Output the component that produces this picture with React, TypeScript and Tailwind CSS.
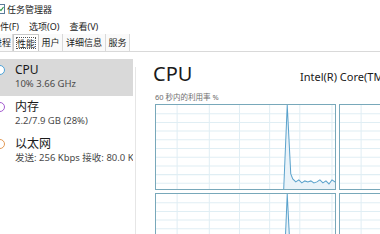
import React from 'react';

const VLINES = [21, 53, 83, 113, 143, 175];
const HLINES = [8.6, 17.2, 25.8, 34.4, 43, 51.6, 60.2, 68.8, 77.4];

const WIGGLE =
  'L134 68 L136 73 L139 76 L142 74 L145 77 L148 75 L151 76 L154 75 L157 77 L160 76 L163 74 L166 77 L169 75 L172 78 L175 74 L178 76 L181 75';

const Graph: React.FC<{ spike?: boolean }> = ({ spike }) => (
  <div className="w-[181px] h-[86px] border-[1.5px] border-[#78a8ba] bg-white">
    <svg width="100%" height="100%" viewBox="0 0 178 83" preserveAspectRatio="none">
      {VLINES.map((x) => (
        <line key={'v' + x} x1={x} y1={0} x2={x} y2={83} stroke="#e0eef4" strokeWidth={1} />
      ))}
      {HLINES.map((y) => (
        <line key={'h' + y} x1={0} y1={y} x2={178} y2={y} stroke="#e0eef4" strokeWidth={1} />
      ))}
      {spike && (
        <>
          <path d={`M127 83 L130.5 0 ${WIGGLE} L181 83 Z`} fill="#eaf3f9" />
          <path d={`M127 83 L130.5 0 ${WIGGLE}`} fill="none" stroke="#5aa2cc" strokeWidth={1} />
        </>
      )}
    </svg>
  </div>
);

const ITEMS = [
  { name: 'CPU', sub: '10% 3.66 GHz', color: 'border-[#4ea3d8]', active: true },
  { name: '内存', sub: '2.2/7.9 GB (28%)', color: 'border-[#a45bd0]', active: false },
  { name: '以太网', sub: '发送: 256 Kbps 接收: 80.0 Kbps', color: 'border-[#e39a55]', active: false },
];

export default function App() {
  return (
    <div
      className="w-[380px] h-[234px] overflow-hidden bg-white text-[#1a1a1a]"
      style={{ fontFamily: '"Noto Sans", "Noto Sans CJK SC", sans-serif' }}
    >
      {/* title bar */}
      <div className="h-[18px] flex items-center">
        <svg width="10" height="10" viewBox="0 0 10 10" className="-ml-[5px]">
          <rect x="0.5" y="0.5" width="9" height="9" fill="#fff" stroke="#5a7a9a" />
          <path d="M1.5 7 L4 5 L6 6.5 L8.5 3" fill="none" stroke="#2f9a4a" strokeWidth="1.2" />
        </svg>
        <span className="ml-[2px] text-[9px] leading-none">任务管理器</span>
      </div>

      {/* menu bar */}
      <div className="h-[16px] flex items-center text-[9px] leading-none">
        <span className="-ml-[9px]">文件(F)</span>
        <span className="ml-[10px]">选项(O)</span>
        <span className="ml-[10px]">查看(V)</span>
      </div>

      {/* tabs */}
      <div className="h-[18px] flex items-stretch border-b border-[#d9d9d9] text-[9px] leading-none">
        <div className="-ml-[15px] w-[28px] flex items-center justify-end pr-[1px] border-r border-[#d9d9d9] bg-[#fafafa]">进程</div>
        <div className="w-[26px] flex items-center justify-center border border-b-0 border-[#c8c8c8] bg-white p-[2px]">
          <div className="w-full h-full flex items-center justify-center border border-dotted border-[#555]">性能</div>
        </div>
        <div className="w-[24px] flex items-center justify-center border-r border-[#d9d9d9] bg-[#fafafa]">用户</div>
        <div className="w-[43px] flex items-center justify-center border-r border-[#d9d9d9] bg-[#fafafa]">详细信息</div>
        <div className="w-[24px] flex items-center justify-center border-r border-[#d9d9d9] bg-[#fafafa]">服务</div>
      </div>

      {/* content */}
      <div className="flex">
        <div className="w-[136px] shrink-0 pt-[7px] flex">
          <div className="w-[133px] overflow-hidden">
            {ITEMS.map((it) => (
              <div key={it.name} className={`h-[37px] pt-[4px] ${it.active ? 'bg-[#d9d9d9]' : ''}`}>
                <div className="flex items-center h-[14px]">
                  <div className={`w-[10px] h-[10px] -ml-[5px] rounded-full border-[1.5px] bg-white ${it.color}`} />
                  <span className="ml-[10px] text-[12px] leading-[14px]">{it.name}</span>
                </div>
                <div className="pl-[15px] text-[9.5px] leading-[13px] text-[#4a4a4a] whitespace-nowrap">{it.sub}</div>
              </div>
            ))}
          </div>
          <div className="ml-[2px] mt-[8px] w-px h-[180px] bg-[#e6e6e6]" />
        </div>

        <div className="pl-[19px] pt-[10px]">
          <div className="flex items-baseline whitespace-nowrap -ml-[2px]">
            <span className="w-[147px] text-[20px] leading-[24px]">CPU</span>
            <span className="text-[11px]">Intel(R) Core(TM) i5-8500 CPU @ 3.00GHz</span>
          </div>
          <div className="mt-[6px] text-[7.5px] leading-[10px] text-[#6e6e6e] whitespace-nowrap">60 秒内的利用率 %</div>
          <div className="mt-[2px] grid grid-cols-[181px_181px] gap-[3px]">
            <Graph spike />
            <Graph />
            <Graph spike />
            <Graph />
          </div>
        </div>
      </div>
    </div>
  );
}
